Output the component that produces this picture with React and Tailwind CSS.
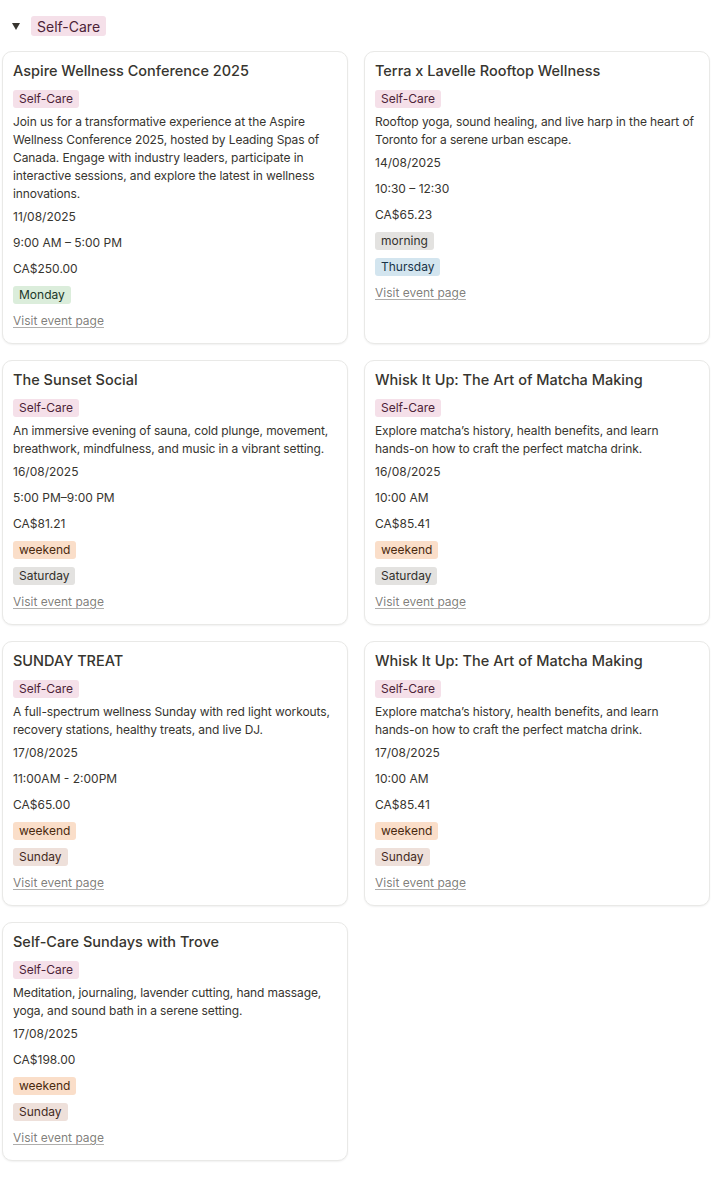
import React from "react";

const TAG_STYLES = {
  pink: "bg-[#f5e0e9] text-[#4c2337]",
  gray: "bg-[#e3e2e0] text-[#32302c]",
  brown: "bg-[#eee0da] text-[#442a1e]",
  orange: "bg-[#fadec9] text-[#49290e]",
  green: "bg-[#dbeddb] text-[#1c3829]",
  blue: "bg-[#d3e5ef] text-[#183347]",
};

const events = [
  {
    title: "Aspire Wellness Conference 2025",
    desc: "Join us for a transformative experience at the Aspire Wellness Conference 2025, hosted by Leading Spas of Canada. Engage with industry leaders, participate in interactive sessions, and explore the latest in wellness innovations.",
    date: "11/08/2025",
    time: "9:00 AM – 5:00 PM",
    price: "CA$250.00",
    tags: [["Monday", "green"]],
  },
  {
    title: "Terra x Lavelle Rooftop Wellness",
    desc: "Rooftop yoga, sound healing, and live harp in the heart of Toronto for a serene urban escape.",
    date: "14/08/2025",
    time: "10:30 – 12:30",
    price: "CA$65.23",
    tags: [
      ["morning", "gray"],
      ["Thursday", "blue"],
    ],
  },
  {
    title: "The Sunset Social",
    desc: "An immersive evening of sauna, cold plunge, movement, breathwork, mindfulness, and music in a vibrant setting.",
    date: "16/08/2025",
    time: "5:00 PM–9:00 PM",
    price: "CA$81.21",
    tags: [
      ["weekend", "orange"],
      ["Saturday", "gray"],
    ],
  },
  {
    title: "Whisk It Up: The Art of Matcha Making",
    desc: "Explore matcha’s history, health benefits, and learn hands-on how to craft the perfect matcha drink.",
    date: "16/08/2025",
    time: "10:00 AM",
    price: "CA$85.41",
    tags: [
      ["weekend", "orange"],
      ["Saturday", "gray"],
    ],
  },
  {
    title: "SUNDAY TREAT",
    desc: "A full-spectrum wellness Sunday with red light workouts, recovery stations, healthy treats, and live DJ.",
    date: "17/08/2025",
    time: "11:00AM - 2:00PM",
    price: "CA$65.00",
    tags: [
      ["weekend", "orange"],
      ["Sunday", "brown"],
    ],
  },
  {
    title: "Whisk It Up: The Art of Matcha Making",
    desc: "Explore matcha’s history, health benefits, and learn hands-on how to craft the perfect matcha drink.",
    date: "17/08/2025",
    time: "10:00 AM",
    price: "CA$85.41",
    tags: [
      ["weekend", "orange"],
      ["Sunday", "brown"],
    ],
  },
  {
    title: "Self-Care Sundays with Trove",
    desc: "Meditation, journaling, lavender cutting, hand massage, yoga, and sound bath in a serene setting.",
    date: "17/08/2025",
    price: "CA$198.00",
    tags: [
      ["weekend", "orange"],
      ["Sunday", "brown"],
    ],
  },
];

const Tag = ({ label, color, big }) => (
  <span
    className={`${TAG_STYLES[color]} inline-flex items-center rounded-[3px] whitespace-nowrap ${
      big ? "h-[20px] px-[6px] text-[14px]" : "h-[18px] px-[6px] text-[12px]"
    }`}
  >
    {label}
  </span>
);

const Row = ({ children }) => (
  <div className="h-[26px] flex items-center text-[12px] text-[#37352f]">{children}</div>
);

const EventCard = ({ ev }) => (
  <div className="flex flex-col rounded-[10px] border border-[#e9e9e7] bg-white shadow-[0_1px_2px_rgba(15,15,15,0.06)] px-[10px] pt-[9px] pb-[9px]">
    <div className="text-[14.5px] leading-[20px] font-medium text-[#37352f] mb-[4px]">{ev.title}</div>
    <div className="h-[28px] flex items-center">
      <Tag label="Self-Care" color="pink" />
    </div>
    <p className="text-[12px] leading-[18px] tracking-[-0.1px] text-[#37352f] mb-[1px]">{ev.desc}</p>
    <Row>{ev.date}</Row>
    {ev.time && <Row>{ev.time}</Row>}
    <Row>{ev.price}</Row>
    {ev.tags.map(([label, color]) => (
      <Row key={label}>
        <Tag label={label} color={color} />
      </Row>
    ))}
    <Row>
      <a href="#" className="text-[#37352f]/65 underline decoration-[#37352f]/40 underline-offset-2">
        Visit event page
      </a>
    </Row>
  </div>
);

export default function App() {
  return (
    <div
      className="min-h-screen bg-white pl-[2px] pr-[16px] pb-[19px]"
      style={{ fontFamily: "Inter, 'Noto Sans', sans-serif" }}
    >
      <div className="h-[24px] mt-[14px] flex items-center gap-[11px] pl-[10px]">
        <svg width="8" height="7" viewBox="0 0 8 7" className="text-[#37352f]">
          <path d="M0 0 H8 L4 7 Z" fill="currentColor" />
        </svg>
        <Tag label="Self-Care" color="pink" big />
      </div>
      <div className="mt-[13px] grid grid-cols-2 gap-[16px]">
        {events.map((ev, i) => (
          <EventCard key={i} ev={ev} />
        ))}
      </div>
    </div>
  );
}
